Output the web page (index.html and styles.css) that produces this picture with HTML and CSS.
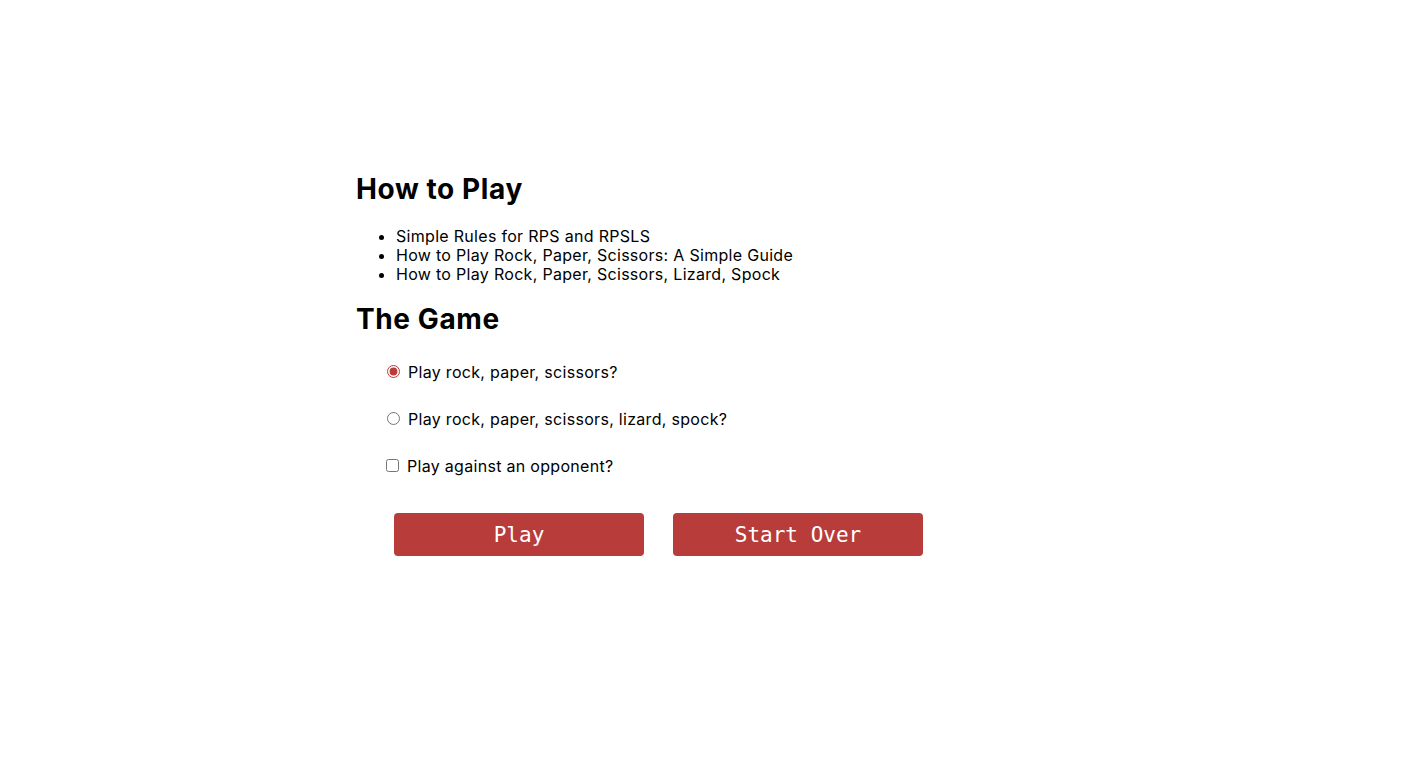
FILE: index.html
```html
<!DOCTYPE html>
<html lang="en">
<head>
<meta charset="utf-8">
<title>Rock, Paper, Scissors</title>
<link rel="stylesheet" href="styles.css">
</head>
<body>
<main class="container">
  <section class="rules">
    <h2 class="heading">How to Play</h2>
    <ul class="rule-list">
      <li>Simple Rules for RPS and RPSLS</li>
      <li>How to Play Rock, Paper, Scissors: A Simple Guide</li>
      <li>How to Play Rock, Paper, Scissors, Lizard, Spock</li>
    </ul>
  </section>
  <section class="game">
    <h2 class="heading">The Game</h2>
    <form class="options">
      <div class="option">
        <input type="radio" id="rps" name="mode" checked>
        <label for="rps">Play rock, paper, scissors?</label>
      </div>
      <div class="option">
        <input type="radio" id="rpsls" name="mode">
        <label for="rpsls">Play rock, paper, scissors, lizard, spock?</label>
      </div>
      <div class="option">
        <input type="checkbox" id="opponent">
        <label for="opponent">Play against an opponent?</label>
      </div>
      <div class="actions">
        <button type="button" class="btn">Play</button>
        <button type="button" class="btn">Start Over</button>
      </div>
    </form>
  </section>
</main>
</body>
</html>
```

FILE: styles.css
```css
html, body {
  margin: 0;
  padding: 0;
  background: #ffffff;
}

body {
  font-family: Inter, "Open Sans", sans-serif;
  color: #000000;
  font-size: 16px;
  letter-spacing: 0.3px;
}

.container {
  width: 716px;
  margin: 0 auto;
  padding-top: 173px;
}

.heading {
  font-size: 28px;
  font-weight: 700;
  line-height: 32px;
  letter-spacing: 0.6px;
  margin: 0;
}

.rule-list {
  margin: 22px 0 19px;
  padding-left: 40px;
  line-height: 19px;
}

.options {
  padding-left: 26px;
  margin-top: 13px;
}

.option {
  display: flex;
  align-items: center;
  height: 47px;
}

.option input[type="radio"] {
  margin: 0 8px 0 5px;
  width: 13px;
  height: 13px;
  accent-color: #b83c3a;
}

.option input[type="checkbox"] {
  margin: 0 8px 0 4px;
  width: 13px;
  height: 13px;
  accent-color: #b83c3a;
}

.actions {
  display: flex;
  gap: 29px;
  padding-left: 12px;
  margin-top: 24px;
}

.btn {
  width: 250px;
  height: 43px;
  border: none;
  border-radius: 4px;
  background: #b83c3a;
  color: #ffffff;
  font-family: "DejaVu Sans Mono", "Liberation Mono", monospace;
  font-size: 21px;
  letter-spacing: 0;
  padding: 0;
}
```
